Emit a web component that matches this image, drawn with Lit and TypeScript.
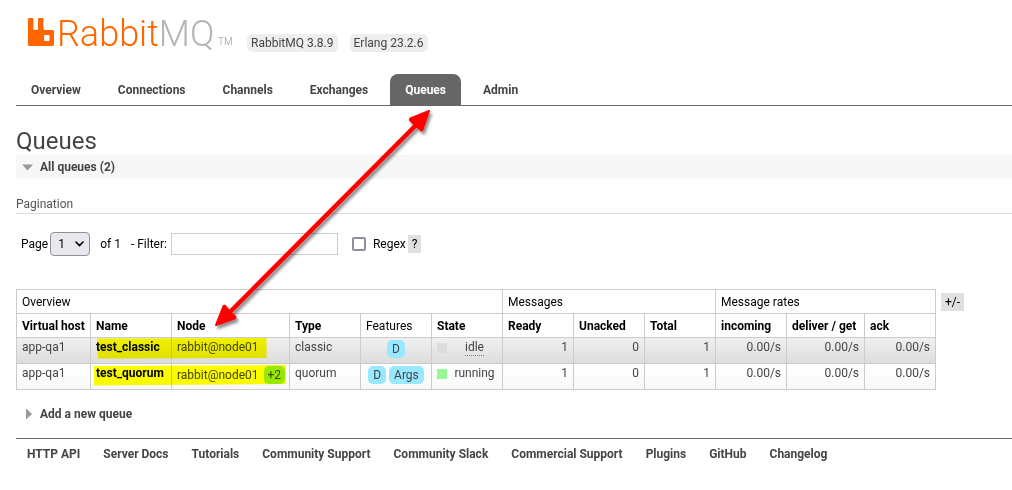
import { LitElement, html, css } from "lit";
import { customElement, property, state } from "lit/decorators.js";

interface QueueRow {
  vhost: string;
  name: string;
  node: string;
  mirrors?: string;
  type: string;
  features: string[];
  state: "idle" | "running";
  ready: number;
  unacked: number;
  total: number;
  rates: string[];
}

const TABS = ["Overview", "Connections", "Channels", "Exchanges", "Queues", "Admin"];

const FOOTER_LINKS = [
  "HTTP API", "Server Docs", "Tutorials", "Community Support", "Community Slack",
  "Commercial Support", "Plugins", "GitHub", "Changelog",
];

const QUEUES: QueueRow[] = [
  {
    vhost: "app-qa1", name: "test_classic", node: "rabbit@node01", type: "classic",
    features: ["D"], state: "idle", ready: 1, unacked: 0, total: 1,
    rates: ["0.00/s", "0.00/s", "0.00/s"],
  },
  {
    vhost: "app-qa1", name: "test_quorum", node: "rabbit@node01", mirrors: "+2", type: "quorum",
    features: ["D", "Args"], state: "running", ready: 1, unacked: 0, total: 1,
    rates: ["0.00/s", "0.00/s", "0.00/s"],
  },
];

@customElement("app-header")
export class AppHeader extends LitElement {
  @state() private active = "Queues";

  static styles = css`
    :host { display: block; }
    .top { display: flex; align-items: flex-end; height: 52px; }
    .logo { display: flex; align-items: flex-start; align-self: flex-start; height: 36px; margin: 0 14px 0 12px; padding-top: 16px; color: #f60; text-decoration: none; }
    .mark { display: block; width: 26px; height: 28px; margin: 2px 3px 0 0; }
    .word { width: 158px; font-weight: 300; font-size: 36px; line-height: 36px; }
    .mq { color: #b5b5b5; }
    .tm { width: 15px; margin-left: 3px; padding-top: 20px; font-weight: 300; font-size: 10px; line-height: 12px; color: #999; }
    .versions { display: flex; gap: 12px; margin: 0; padding: 0; list-style: none; }
    .versions li { padding: 1px 4px; line-height: 16px; border-radius: 5px; background: #eee; color: #444; }
    .tabs { display: flex; gap: 7px; margin: 22px 0 0; padding: 0; list-style: none; border-bottom: 1px solid #666; }
    .tab { display: block; padding: 2px 15px 0; line-height: 29px; font-weight: 700; color: #444; text-decoration: none; border-radius: 8px 8px 0 0; }
    .tab.selected { background: #666; color: #fff; }
  `;

  render() {
    return html`
      <div class="top">
        <a class="logo" href="#/" aria-label="RabbitMQ">
          <svg class="mark" viewBox="0 0 26 28" aria-hidden="true">
            <path fill="#f60" fill-rule="evenodd" d="M1.2 0H4.2Q5.400 0 5.400 1.200V10.800Q5.400 12 6.600 12H8.800Q10 12 10 10.800V1.200Q10 0 11.200 0H14.200Q15.400 0 15.400 1.200V10.800Q15.400 12 16.600 12H24.800Q26 12 26 13.200V26.800Q26 28 24.800 28H1.200Q0 28 0 26.800V1.200Q0 0 1.200 0ZM17 17Q16 17 16 18V22Q16 23 17 23H20.500Q21.500 23 21.500 22V18Q21.500 17 20.500 17Z"/>
          </svg>
          <span class="word">Rabbit<span class="mq">MQ</span></span>
          <span class="tm">TM</span>
        </a>
        <ul class="versions"><li>RabbitMQ 3.8.9</li><li>Erlang 23.2.6</li></ul>
      </div>
      <nav>
        <ul class="tabs">
          ${TABS.map((t) => html`<li><a class="tab ${t === this.active ? "selected" : ""}" href="#/${t.toLowerCase()}" @click=${() => (this.active = t)}>${t}</a></li>`)}
        </ul>
      </nav>
    `;
  }
}

@customElement("queue-filter")
export class QueueFilter extends LitElement {
  static styles = css`
    :host { display: block; }
    h3 { margin: 0; font-size: 12px; font-weight: 400; line-height: 18px; color: #555; border-bottom: 1px solid #ddd; }
    .controls { display: flex; align-items: center; height: 24px; margin: 18px 0 0; padding-left: 5px; color: #000; }
    .page { margin-right: 2px; }
    .picker { display: grid; align-items: center; width: 40px; margin-right: 10px; }
    select { grid-area: 1 / 1; appearance: none; height: 24px; padding: 0 7px; border: 1px solid #8f8f9d; border-radius: 4px; background: #e9e9ed; color: #000; font: inherit; }
    .chevron { grid-area: 1 / 1; justify-self: end; margin-right: 6px; width: 9px; height: 6px; pointer-events: none; }
    .count { margin-right: 10px; }
    .filter-label { margin-right: 4px; }
    .filter { box-sizing: border-box; width: 167px; height: 22px; padding: 3px; border: 1px solid #ccc; background: #fff; font: inherit; }
    .regex { appearance: none; box-sizing: border-box; width: 14px; height: 14px; margin: 0 7px 0 14px; border: 2px solid #8f8f9d; border-radius: 2px; background: #fff; }
    .regex:checked { background: #8f8f9d; }
    .help { margin-left: 2px; padding: 0 4px; border: 0; background: #e0e0e0; color: #000; font: inherit; line-height: 18px; }
  `;

  render() {
    return html`
      <h3>Pagination</h3>
      <div class="controls">
        <label class="page" for="page">Page</label>
        <span class="picker">
          <select id="page"><option>1</option></select>
          <svg class="chevron" viewBox="0 0 9 6" aria-hidden="true"><path d="M1 1L4.500 4.500L8 1" fill="none" stroke="#000" stroke-width="1.600" stroke-linecap="round"/></svg>
        </span>
        <span class="count">of 1</span>
        <label class="filter-label" for="filter">- Filter:</label>
        <input class="filter" id="filter" type="text">
        <input class="regex" id="regex" type="checkbox">
        <label for="regex">Regex</label>
        <button class="help" type="button">?</button>
      </div>
    `;
  }
}

@customElement("queue-table")
export class QueueTable extends LitElement {
  @property({ attribute: false }) rows: QueueRow[] = [];

  static styles = css`
    :host { display: flex; align-items: flex-start; gap: 5px; }
    table { table-layout: fixed; width: 920px; border-collapse: collapse; color: #000; }
    .c71 { width: 71px; }
    .c74 { width: 74px; }
    .c78 { width: 78px; }
    .c81 { width: 81px; }
    .c118 { width: 118px; }
    th, td { padding: 0 5px; border: 1px solid #ccc; text-align: left; line-height: 17px; white-space: nowrap; font-weight: 400; }
    th { height: 21px; padding-top: 2px; }
    th.sort { font-weight: 700; }
    .sort button { padding: 0; border: 0; background: none; color: inherit; font: inherit; }
    td { height: 24px; padding-top: 1px; vertical-align: top; color: #444; }
    tbody tr { background: linear-gradient(#fff, #f8f8f8); }
    tbody tr.alt { background: linear-gradient(#f0f0f0, #dcdcdc); }
    .num { text-align: right; }
    .name { color: #000; font-weight: 700; text-decoration: none; }
    .badges { display: flex; justify-content: center; gap: 3px; padding-top: 1px; }
    .badge { padding: 0 5px; border-radius: 5px; background: #98e9ff; line-height: 18px; }
    .node { display: flex; align-items: center; gap: 5px; }
    .node.mirrored { padding-top: 1px; }
    .plus { padding: 0 4px; border-radius: 5px; background: #98e9ff; line-height: 18px; }
    .state { display: flex; align-items: center; }
    .dot { width: 10px; height: 10px; margin-right: 5px; background: #98f898; }
    .idle .dot { background: #ddd; }
    .label { flex: 1; text-align: center; }
    .idle abbr { border-bottom: 1px dotted #777; text-decoration: none; line-height: 15px; display: inline-block; }
    .toggle { margin-top: 4px; padding: 0 4px; border: 0; background: #e0e0e0; color: #000; font: inherit; line-height: 18px; }
  `;

  private head(text: string) {
    return html`<th class="sort" scope="col"><button type="button">${text}</button></th>`;
  }

  render() {
    return html`
      <table>
        <colgroup>
          <col class="c74"><col class="c81"><col class="c118"><col class="c71"><col class="c71"><col class="c71">
          <col class="c71"><col class="c71"><col class="c71"><col class="c71"><col class="c78"><col class="c71">
        </colgroup>
        <thead>
          <tr><th colspan="6">Overview</th><th colspan="3">Messages</th><th colspan="3">Message rates</th></tr>
          <tr>
            ${["Virtual host", "Name", "Node", "Type"].map((t) => this.head(t))}
            <th scope="col">Features</th>
            ${["State", "Ready", "Unacked", "Total", "incoming", "deliver / get", "ack"].map((t) => this.head(t))}
          </tr>
        </thead>
        <tbody>
          ${this.rows.map((r, i) => html`
            <tr class=${i % 2 === 0 ? "alt" : ""}>
              <td>${r.vhost}</td>
              <td><a class="name" href="#/queues/${r.name}">${r.name}</a></td>
              <td><div class="node ${r.mirrors ? "mirrored" : ""}">${r.node}${r.mirrors ? html`<span class="plus">${r.mirrors}</span>` : ""}</div></td>
              <td>${r.type}</td>
              <td><div class="badges">${r.features.map((f) => html`<span class="badge">${f}</span>`)}</div></td>
              <td><div class="state ${r.state}"><span class="dot"></span><span class="label">${r.state === "idle" ? html`<abbr>idle</abbr>` : r.state}</span></div></td>
              <td class="num">${r.ready}</td><td class="num">${r.unacked}</td><td class="num">${r.total}</td>
              ${r.rates.map((x) => html`<td class="num">${x}</td>`)}
            </tr>`)}
        </tbody>
      </table>
      <button class="toggle" type="button">+/-</button>
    `;
  }
}

@customElement("app-root")
export class AppRoot extends LitElement {
  static styles = css`
    :host { display: block; position: relative; padding-left: 16px; overflow: hidden; background: #fff; color: #444; font: 12px/18px Roboto, sans-serif; }
    h1 { margin: 21px 0 0; font-size: 24px; font-weight: 400; line-height: 28px; color: #444; }
    h2 { margin: 0; font-size: 12px; font-weight: 700; line-height: 24px; }
    .section { display: flex; align-items: center; gap: 7px; width: 100%; padding: 0 0 0 6px; border: 0; background: none; color: #444; font: inherit; text-align: left; }
    .open { background: #f7f7f7; }
    .arrow { width: 11px; height: 10px; fill: #999; }
    queue-filter { margin-top: 16px; }
    queue-table { margin-top: 33px; }
    .add { margin-top: 12px; }
    footer { display: flex; flex-wrap: wrap; gap: 0 23px; margin-top: 12px; padding: 6px 11px; border-top: 1px solid #666; }
    footer a { color: #444; font-weight: 700; text-decoration: none; }
    .notes { position: absolute; left: 0; top: 0; width: 500px; height: 400px; pointer-events: none; }
    .marker { mix-blend-mode: multiply; }
  `;

  render() {
    return html`
      <app-header></app-header>
      <main>
        <h1>Queues</h1>
        <h2 class="open"><button class="section" type="button">
          <svg class="arrow" viewBox="0 0 11 10" aria-hidden="true"><path d="M0 2.500H11L5.500 8.500Z"/></svg>All queues (2)
        </button></h2>
        <queue-filter></queue-filter>
        <queue-table .rows=${QUEUES}></queue-table>
        <h2 class="add"><button class="section" type="button">
          <svg class="arrow" viewBox="0 0 11 10" aria-hidden="true"><path d="M4 -.5V10.500L10 5Z"/></svg>Add a new queue
        </button></h2>
      </main>
      <footer>${FOOTER_LINKS.map((l) => html`<a href="#">${l}</a>`)}</footer>
      <svg class="notes marker" viewBox="0 0 500 400" aria-hidden="true">
        <path fill="#ff0" d="M97 338.500L266.500 338V358L98 358.500ZM94 366L286 365V384L94 385.500Z"/>
      </svg>
      <svg class="notes" viewBox="0 0 500 400" aria-hidden="true">
        <defs><filter id="shadow"><feDropShadow dx="2" dy="3" stdDeviation="1.500" flood-color="#000" flood-opacity="0.450"/></filter></defs>
        <g filter="url(#shadow)">
          <path d="M224 318L423 118" stroke="#f00" stroke-width="4.500"/>
          <path fill="#f00" stroke="#f00" stroke-width="2" stroke-linejoin="round" d="M429 111L410.500 118.500Q409 120 411 121L415.500 125.500L421 130Q422 131 422.500 129.500ZM216 325L223.500 306Q225 305 226 307L230 312L235 316.500Q236 318 234.500 318.500Z"/>
        </g>
      </svg>
    `;
  }
}
